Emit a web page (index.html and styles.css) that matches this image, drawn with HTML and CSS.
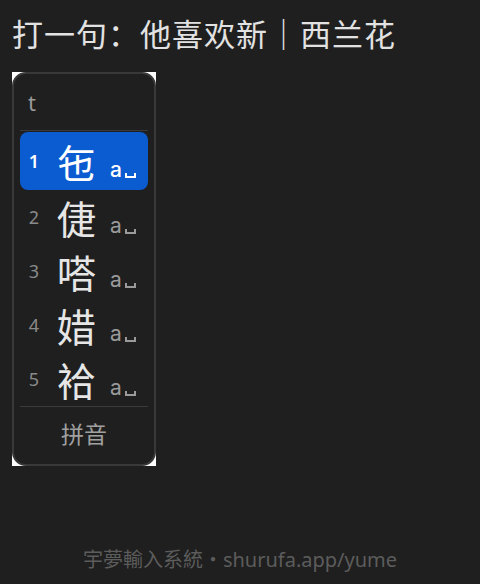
FILE: index.html
```html
<!DOCTYPE html>
<html lang="zh">
<head>
<meta charset="utf-8">
<link rel="stylesheet" href="styles.css">
</head>
<body>
<div class="page">
  <h1 class="title">打一句：他喜欢新｜西兰花</h1>
  <div class="panel-wrap">
    <div class="panel">
      <div class="input">t</div>
      <div class="sep"></div>
      <ul class="list">
        <li class="row sel"><span class="num">1</span><span class="cand">&#x340C;</span><span class="code">a<span class="space"></span></span></li>
        <li class="row"><span class="num">2</span><span class="cand">倢</span><span class="code">a<span class="space"></span></span></li>
        <li class="row"><span class="num">3</span><span class="cand">嗒</span><span class="code">a<span class="space"></span></span></li>
        <li class="row"><span class="num">4</span><span class="cand">㛭</span><span class="code">a<span class="space"></span></span></li>
        <li class="row"><span class="num">5</span><span class="cand">袷</span><span class="code">a<span class="space"></span></span></li>
      </ul>
      <div class="sep"></div>
      <div class="mode">拼音</div>
    </div>
  </div>
  <footer class="footer">宇夢輸入系統・shurufa.app/yume</footer>
</div>
</body>
</html>
```
FILE: styles.css
```css
html, body {
  margin: 0;
  padding: 0;
  background: #1f1f1f;
}
body {
  width: 480px;
  height: 584px;
  overflow: hidden;
  font-family: "Noto Sans", "Noto Sans CJK TC", sans-serif;
}
.page {
  height: 584px;
  display: flex;
  flex-direction: column;
}
.title {
  margin: 13px 0 0 12px;
  font-family: "Noto Sans CJK TC", sans-serif;
  font-weight: 400;
  font-size: 31px;
  line-height: 40px;
  color: #e2e2e2;
  letter-spacing: 1px;
}
.panel-wrap {
  margin: 19px 0 0 12px;
  width: 144px;
  height: 394px;
  background: #ffffff;
}
.panel {
  box-sizing: border-box;
  width: 144px;
  height: 394px;
  background: #1f1f1f;
  border: 2px solid #393939;
  border-radius: 14px;
  padding: 0 6px;
  display: flex;
  flex-direction: column;
}
.input {
  height: 56px;
  padding-left: 8px;
  font-size: 22px;
  line-height: 56px;
  color: #9a9a9a;
}
.sep {
  height: 1px;
  background: #3a3a3a;
}
.list {
  list-style: none;
  margin: 0;
  padding: 1px 0 0;
}
.row {
  height: 54px;
  display: flex;
  align-items: center;
  color: #e6e6e6;
}
.row.sel {
  height: 58px;
  background: #0b5bd1;
  border-radius: 8px;
  color: #ffffff;
}
.num {
  width: 28px;
  text-align: center;
  font-size: 18px;
  color: #8a8a8a;
}
.sel .num {
  color: #ffffff;
  font-weight: 600;
}
.cand {
  margin-left: 9px;
  font-family: "Noto Sans CJK TC", sans-serif;
  font-size: 39px;
  line-height: 46px;
}
.code {
  margin-left: 14px;
  margin-top: 16px;
  font-family: "Inter", sans-serif;
  font-size: 21px;
  color: #9a9a9a;
  display: flex;
  align-items: flex-end;
}
.sel .code {
  color: #ffffff;
  font-weight: 500;
}
.space {
  display: inline-block;
  width: 7px;
  height: 3px;
  margin: 0 0 4px 3px;
  border: 2px solid currentColor;
  border-top: 0;
}
.mode {
  flex: 1;
  display: flex;
  align-items: center;
  justify-content: center;
  padding-bottom: 6px;
  font-family: "Noto Sans CJK TC", sans-serif;
  font-size: 23px;
  color: #a0a0a0;
}
.footer {
  margin-top: auto;
  margin-bottom: 10px;
  text-align: center;
  font-family: "Noto Sans", "Noto Sans CJK TC", sans-serif;
  font-size: 20px;
  line-height: 28px;
  color: #5c5c5c;
}
```
